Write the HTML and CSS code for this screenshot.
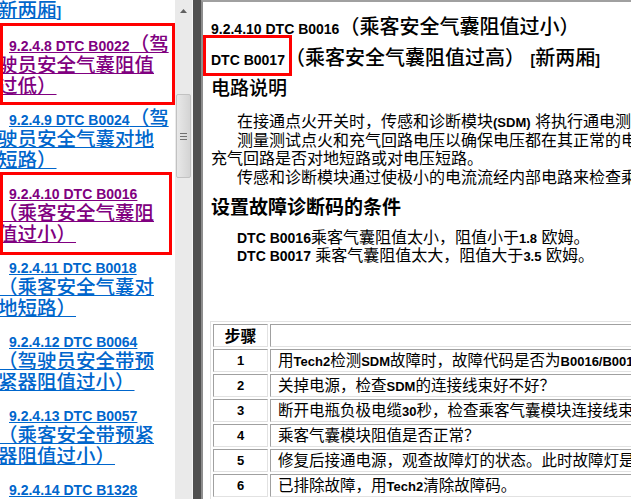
FILE: index.html
```html
<!DOCTYPE html>
<html lang="zh-CN">
<head>
    <meta charset="UTF-8">
    <meta name="viewport" content="width=device-width, initial-scale=1.0">
    <title>9.2.4.10 DTC B0016</title>
    <link rel="stylesheet" href="styles.css">
</head>
<body>

    <!-- Contents pane with its scrollbar -->
    <div class="sidebar">
        <div class="toc">
            <p class="toc-item toc-tail"><a href="#">新两厢<b class="code">]</b></a></p>
            <p class="toc-item mark-a"><a class="visited" href="#"><b class="code">9.2.4.8 DTC B0022</b>（驾驶员安全气囊阻值过低）</a></p>
            <p class="toc-item"><a href="#"><b class="code">9.2.4.9 DTC B0024</b>（驾驶员安全气囊对地短路）</a></p>
            <p class="toc-item mark-b"><a class="visited" href="#"><b class="code">9.2.4.10 DTC B0016</b>（乘客安全气囊阻值过小）</a></p>
            <p class="toc-item"><a href="#"><b class="code">9.2.4.11 DTC B0018</b>（乘客安全气囊对地短路）</a></p>
            <p class="toc-item"><a href="#"><b class="code">9.2.4.12 DTC B0064</b>（驾驶员安全带预紧器阻值过小）</a></p>
            <p class="toc-item"><a href="#"><b class="code">9.2.4.13 DTC B0057</b>（乘客安全带预紧器阻值过小）</a></p>
            <p class="toc-item"><a href="#"><b class="code">9.2.4.14 DTC B1328</b>（乘客安全气囊指示灯电路故障）</a></p>
        </div>
        <div class="scrollbar">
            <div class="sb-btn">
                <svg width="7" height="4" viewBox="0 0 7 4"><path d="M0 4 L3.5 0 L7 4 Z" fill="#606060"/></svg>
            </div>
            <div class="sb-thumb"><span class="grip"></span></div>
        </div>
    </div>

    <div class="splitter"></div>

    <!-- Document pane -->
    <div class="main">
        <div class="doc">
            <p class="title"><b class="code">9.2.4.10 DTC B0016</b>（乘客安全气囊阻值过小）</p>
            <p class="title"><span class="boxed"><b class="code">DTC B0017</b></span>（乘客安全气囊阻值过高） <b class="code">[</b>新两厢<b class="code">]</b></p>

            <h3 class="head head-light">电路说明</h3>
            <p class="para first">在接通点火开关时，传感和诊断模块<b>(SDM)</b> 将执行通电测试。</p>
            <p class="para">测量测试点火和充气回路电压以确保电压都在其正常的电压范围内，同时检查<br>充气回路是否对地短路或对电压短路。</p>
            <p class="para">传感和诊断模块通过使极小的电流流经内部电路来检查乘客气囊展开回路的导通性。</p>

            <h3 class="head">设置故障诊断码的条件</h3>
            <p class="cond first"><b class="code">DTC B0016</b>乘客气囊阻值太小，阻值小于<b>1.8</b> 欧姆。</p>
            <p class="cond"><b class="code">DTC B0017</b> 乘客气囊阻值太大，阻值大于<b>3.5</b> 欧姆。</p>

            <table class="steps">
                <tr><td class="no step-head">步骤</td><td></td></tr>
                <tr><td class="no">1</td><td>用<b>Tech2</b>检测<b>SDM</b>故障时，故障代码是否为<b>B0016/B0017</b>？</td></tr>
                <tr><td class="no">2</td><td>关掉电源，检查<b>SDM</b>的连接线束好不好？</td></tr>
                <tr><td class="no">3</td><td>断开电瓶负极电缆<b>30</b>秒，检查乘客气囊模块连接线束是否正常？</td></tr>
                <tr><td class="no">4</td><td>乘客气囊模块阻值是否正常？</td></tr>
                <tr><td class="no">5</td><td>修复后接通电源，观查故障灯的状态。此时故障灯是否熄灭？</td></tr>
                <tr><td class="no">6</td><td>已排除故障，用<b>Tech2</b>清除故障码。</td></tr>
            </table>
        </div>
    </div>

</body>
</html>
```

FILE: styles.css
```css
/* Page frame */
body {
    margin: 0;
    display: flex;
    height: 100vh;
    overflow: hidden;
    font-family: "Liberation Sans", "Noto Sans CJK SC", sans-serif;
    background: #fff;
    color: #000;
}

b {
    font-family: "Liberation Sans", Arial, sans-serif;
    font-weight: bold;
    font-size: 13px;
    line-height: 1;
}

/* Contents pane */
.sidebar {
    display: flex;
    flex-shrink: 0;
}
.toc {
    width: 175px;
    overflow: hidden;
}
.toc-item {
    position: relative;
    margin: 0 5px 11px -2px;
    font-size: 19.5px;
    font-weight: 500;
    line-height: 21px;
    text-indent: 11px;
}
.toc-tail {
    text-indent: 0;
    margin-bottom: 12.5px;
}
.toc-item a {
    color: #0066cc;
    text-decoration: underline;
}
.toc-item a.visited {
    color: #800080;
}
.code {
    font-size: 14px;
}

/* Red marker boxes drawn over the entries */
.mark-a::after,
.mark-b::after {
    content: "";
    position: absolute;
    border: 3px solid #ff0000;
    pointer-events: none;
}
.mark-a::after {
    top: -11px;
    bottom: -8px;
    left: 2px;
    right: -5px;
}
.mark-b::after {
    top: -10px;
    bottom: -10px;
    left: 2px;
    right: -2px;
}

/* Scrollbar */
.scrollbar {
    width: 17px;
    background: #eaeaea;
    border-right: 1px solid #f6f6f6;
}
.sb-btn {
    height: 22px;
    display: flex;
    align-items: center;
    justify-content: center;
}
.sb-thumb {
    margin: 72px 1px 0 1px;
    height: 82px;
    background: linear-gradient(to right, #e8e8e8, #d4d4d4);
    border: 1px solid #c2c2c2;
    border-radius: 2px;
    display: flex;
    align-items: center;
    justify-content: center;
}
.grip {
    width: 7px;
    height: 7px;
    background: repeating-linear-gradient(to bottom, #707070 0 1px, transparent 1px 3px);
}

/* Pane splitter */
.splitter {
    width: 8px;
    flex-shrink: 0;
    background: #505050;
}

/* Document pane */
.main {
    flex: 1;
    overflow: hidden;
    border-left: 2px solid #8e8e8e;
    border-top: 2px solid #a0a0a0;
}
.doc {
    width: 700px;
    padding: 12px 0 0 8px;
}
.title {
    margin: 0 0 5px;
    font-size: 20px;
    font-weight: 500;
    line-height: 26px;
    white-space: nowrap;
}

/* Boxed code on the second title line; negative margins keep the line height */
.boxed {
    display: inline-block;
    font-size: 14px;
    border: 3px solid #ff0000;
    padding: 9px 4px 0 5px;
    margin: -12px -7px -11px -8px;
}
.head {
    margin: 8px 0 0;
    font-size: 19px;
    line-height: 26px;
    font-weight: bold;
}
.head-light {
    margin-top: 4px;
    font-weight: 500;
}
.para {
    margin: 0;
    font-size: 16px;
    line-height: 18.5px;
    text-indent: 26px;
}
.para.first {
    margin-top: 11px;
}
.cond {
    margin: 0 0 0 26px;
    font-size: 16px;
    line-height: 18px;
}
.cond.first {
    margin-top: 8px;
}

/* Diagnostic steps table */
.steps {
    margin: 56px 0 0 -1px;
    width: 680px;
    border-collapse: separate;
    border-spacing: 2px;
    border: 1px solid;
    border-color: #e2e2e2 #a0a0a0 #a0a0a0 #e2e2e2;
}
.steps td {
    border: 1px solid;
    border-color: #a0a0a0 #e2e2e2 #e2e2e2 #a0a0a0;
    padding: 0 7px;
    font-size: 15.5px;
    line-height: 21px;
    white-space: nowrap;
}
.steps td.no {
    box-sizing: border-box;
    width: 55px;
    padding: 0;
    text-align: center;
    font-family: "Liberation Sans", Arial, sans-serif;
    font-weight: bold;
    font-size: 13px;
}
.steps td.step-head {
    font-family: "Noto Sans CJK SC", sans-serif;
    font-size: 16px;
}
```
